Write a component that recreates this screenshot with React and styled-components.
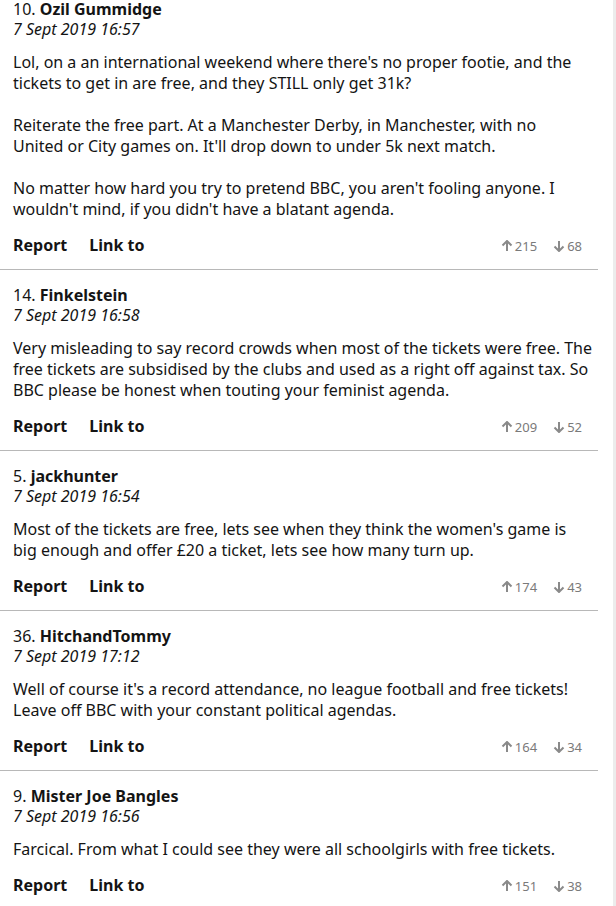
import React from "react";
import styled, { createGlobalStyle } from "styled-components";

const Global = createGlobalStyle`
  html, body { margin: 0; padding: 0; background: #fff; }
  body {
    font-family: "Noto Sans", "Open Sans", Arial, sans-serif;
    color: #141414;
    overflow: hidden;
  }
`;

const Page = styled.div`
  width: 616px;
  height: 906px;
  display: flex;
  box-sizing: border-box;
  overflow: hidden;
`;

const List = styled.div`
  width: 598px;
  margin-top: -16px;
`;

const Gutter = styled.div`
  flex: 1;
  display: flex;
  justify-content: flex-end;
`;

const Rail = styled.div`
  width: 3px;
  background: #ececec;
`;

const Comment = styled.article`
  padding: 15px 0 13px 13px;
  border-bottom: ${(p) => (p.$last ? "none" : "1px solid #b8b8b8")};
`;

const Header = styled.div`
  font-size: 16px;
  line-height: 20px;
`;

const Num = styled.span`
  font-weight: 400;
`;

const Name = styled.span`
  font-weight: 700;
`;

const DateLine = styled.div`
  font-size: 16px;
  line-height: 20px;
  font-style: italic;
`;

const Body = styled.p`
  margin: 13px 0 0;
  font-size: 16px;
  line-height: 21px;
  white-space: nowrap;
`;

const Actions = styled.div`
  display: flex;
  align-items: center;
  gap: 22px;
  margin-top: 14px;
  padding-right: 16px;
  height: 22px;
`;

const ActionLink = styled.span`
  font-size: 16px;
  font-weight: 700;
`;

const Votes = styled.div`
  margin-left: auto;
  display: flex;
  align-items: center;
  gap: 16px;
  color: #7a7a7a;
  font-size: 13px;
  padding-top: 2px;
`;

const Vote = styled.span`
  display: inline-flex;
  align-items: center;
  gap: 2px;
`;

const Arrow = ({ down }) => (
  <svg width="12" height="12" viewBox="0 0 12 12" fill="none" stroke="#8a8a8a" strokeWidth="2">
    {down ? (
      <>
        <path d="M6 1v10" />
        <path d="M1.5 6.5L6 11l4.5-4.5" />
      </>
    ) : (
      <>
        <path d="M6 11V1" />
        <path d="M1.5 5.5L6 1l4.5 4.5" />
      </>
    )}
  </svg>
);

const data = [
  {
    n: "10.",
    name: "Ozil Gummidge",
    date: "7 Sept 2019 16:57",
    lines: [
      "Lol, on a an international weekend where there's no proper footie, and the",
      "tickets to get in are free, and they STILL only get 31k?",
      "",
      "Reiterate the free part. At a Manchester Derby, in Manchester, with no",
      "United or City games on. It'll drop down to under 5k next match.",
      "",
      "No matter how hard you try to pretend BBC, you aren't fooling anyone. I",
      "wouldn't mind, if you didn't have a blatant agenda.",
    ],
    up: 215,
    down: 68,
  },
  {
    n: "14.",
    name: "Finkelstein",
    date: "7 Sept 2019 16:58",
    lines: [
      "Very misleading to say record crowds when most of the tickets were free. The",
      "free tickets are subsidised by the clubs and used as a right off against tax. So",
      "BBC please be honest when touting your feminist agenda.",
    ],
    up: 209,
    down: 52,
  },
  {
    n: "5.",
    name: "jackhunter",
    date: "7 Sept 2019 16:54",
    lines: [
      "Most of the tickets are free, lets see when they think the women's game is",
      "big enough and offer £20 a ticket, lets see how many turn up.",
    ],
    up: 174,
    down: 43,
  },
  {
    n: "36.",
    name: "HitchandTommy",
    date: "7 Sept 2019 17:12",
    lines: [
      "Well of course it's a record attendance, no league football and free tickets!",
      "Leave off BBC with your constant political agendas.",
    ],
    up: 164,
    down: 34,
  },
  {
    n: "9.",
    name: "Mister Joe Bangles",
    date: "7 Sept 2019 16:56",
    lines: ["Farcical. From what I could see they were all schoolgirls with free tickets."],
    up: 151,
    down: 38,
  },
];

export default function App() {
  return (
    <>
      <Global />
      <Page>
        <List>
          {data.map((c, i) => (
            <Comment key={i} $last={i === data.length - 1}>
              <Header>
                <Num>{c.n} </Num>
                <Name>{c.name}</Name>
              </Header>
              <DateLine>{c.date}</DateLine>
              <Body>
                {c.lines.map((l, j) => (
                  <React.Fragment key={j}>
                    {l}
                    {j < c.lines.length - 1 && <br />}
                  </React.Fragment>
                ))}
              </Body>
              <Actions>
                <ActionLink>Report</ActionLink>
                <ActionLink>Link to</ActionLink>
                <Votes>
                  <Vote>
                    <Arrow />
                    {c.up}
                  </Vote>
                  <Vote>
                    <Arrow down />
                    {c.down}
                  </Vote>
                </Votes>
              </Actions>
            </Comment>
          ))}
        </List>
        <Gutter>
          <Rail />
        </Gutter>
      </Page>
    </>
  );
}
